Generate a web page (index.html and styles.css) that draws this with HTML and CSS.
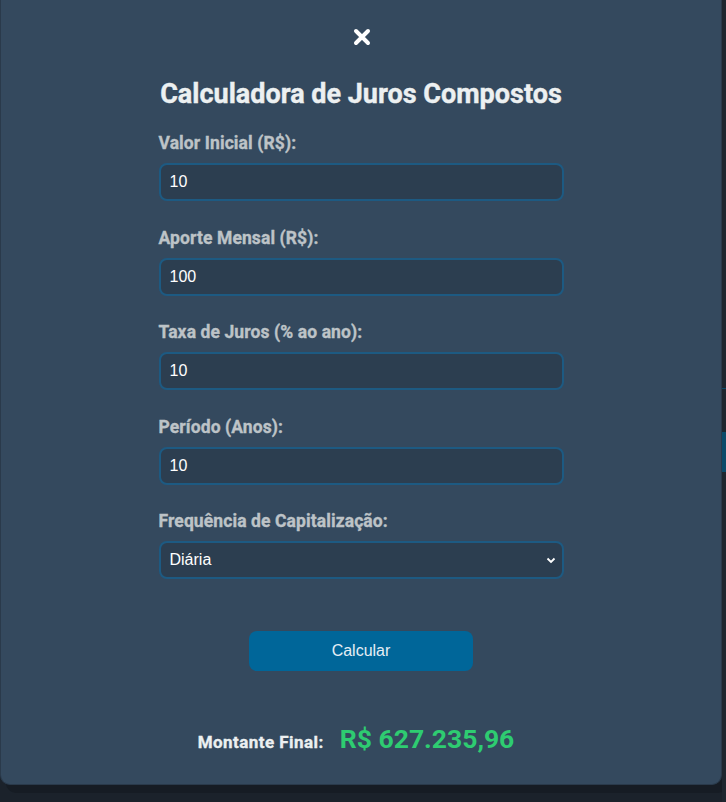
FILE: index.html
```html
<!DOCTYPE html>
<html lang="pt-BR">
<head>
<meta charset="utf-8">
<title>Calculadora de Juros Compostos</title>
<link rel="stylesheet" href="styles.css">
</head>
<body>
<div class="backdrop">
  <div class="modal">
    <button class="close" aria-label="Fechar">
      <svg width="18" height="18" viewBox="0 0 18 18"><path d="M3 3 L15 15 M15 3 L3 15" stroke="#ffffff" stroke-width="4" stroke-linecap="round"/></svg>
    </button>
    <h1 class="title">Calculadora de Juros Compostos</h1>
    <form class="form">
      <div class="field">
        <label class="label">Valor Inicial (R$):</label>
        <div class="input">10</div>
      </div>
      <div class="field">
        <label class="label">Aporte Mensal (R$):</label>
        <div class="input">100</div>
      </div>
      <div class="field">
        <label class="label">Taxa de Juros (% ao ano):</label>
        <div class="input">10</div>
      </div>
      <div class="field">
        <label class="label">Período (Anos):</label>
        <div class="input">10</div>
      </div>
      <div class="field">
        <label class="label">Frequência de Capitalização:</label>
        <div class="input select">
          <span>Diária</span>
          <svg width="10" height="7" viewBox="0 0 10 7"><path d="M1.5 1.5 L5 5 L8.5 1.5" fill="none" stroke="#ffffff" stroke-width="1.8"/></svg>
        </div>
      </div>
      <div class="actions">
        <div class="button">Calcular</div>
      </div>
    </form>
    <div class="result">
      <span class="result-label">Montante Final:</span>
      <span class="result-value">R$ 627.235,96</span>
    </div>
  </div>
  <div class="edge">
    <div class="edge-line"></div>
    <div class="edge-block"></div>
  </div>
</div>
</body>
</html>
```
FILE: styles.css
```css
* { box-sizing: border-box; }
html, body { margin: 0; padding: 0; }
body {
  background: #1b222b;
  font-family: Roboto, "Liberation Sans", sans-serif;
  width: 726px;
  height: 802px;
  overflow: hidden;
}
.backdrop {
  display: flex;
  align-items: flex-start;
  height: 802px;
}
.modal {
  width: 722px;
  height: 785px;
  flex: none;
  background: #34495e;
  border-left: 1px solid #2a3a4b;
  border-right: 1px solid #2a3a4b;
  border-bottom: 1px solid #2a3a4b;
  border-radius: 0 0 10px 10px;
  box-shadow: 6px 8px 0 0 #161c24;
  display: flex;
  flex-direction: column;
  align-items: center;
  padding-top: 28px;
}
.close {
  background: none;
  border: 0;
  padding: 0;
  width: 18px;
  height: 18px;
  display: flex;
  margin-left: 1px;
}
.title {
  margin: 32px 0 0;
  font-size: 27px;
  line-height: 32px;
  font-weight: 700;
  color: #ecf0f1;
  letter-spacing: 0;
  -webkit-text-stroke: 0.4px #ecf0f1;
}
.form {
  width: 405px;
  margin-top: 21px;
  display: flex;
  flex-direction: column;
  gap: 24.5px;
}
.field {
  display: flex;
  flex-direction: column;
  gap: 8px;
}
.label {
  font-size: 17.5px;
  line-height: 24px;
  font-weight: 700;
  color: #bdc3c7;
  letter-spacing: 0.1px;
  -webkit-text-stroke: 0.35px #bdc3c7;
}
.input {
  height: 38px;
  border: 2px solid #1d5a82;
  border-radius: 8px;
  background: #2c3e50;
  color: #ffffff;
  font-family: "Liberation Sans", Arial, sans-serif;
  font-size: 16px;
  padding: 0 9px;
  display: flex;
  align-items: center;
}
.select {
  justify-content: space-between;
  padding-right: 6px;
}
.actions {
  display: flex;
  justify-content: center;
  margin-top: 27px;
}
.button {
  width: 224px;
  height: 40px;
  border-radius: 8px;
  background: #006699;
  color: #e6eef5;
  font-family: "Liberation Sans", Arial, sans-serif;
  font-size: 16px;
  display: flex;
  align-items: center;
  justify-content: center;
}
.result {
  margin-top: 52px;
  padding-right: 10px;
  display: flex;
  align-items: baseline;
  gap: 16px;
}
.result-label {
  font-size: 17px;
  font-weight: 700;
  color: #ecf0f1;
  letter-spacing: 0.45px;
  -webkit-text-stroke: 0.35px #ecf0f1;
}
.result-value {
  font-size: 26.5px;
  font-weight: 700;
  color: #2ecc71;
}
.edge {
  flex: 1;
  height: 802px;
  background: #1e262f;
  display: flex;
  flex-direction: column;
}
.edge-line {
  margin-top: 388px;
  height: 1px;
  background: #0b4a6a;
}
.edge-block {
  margin-top: 43px;
  height: 40px;
  background: #0b4a6a;
}
```
